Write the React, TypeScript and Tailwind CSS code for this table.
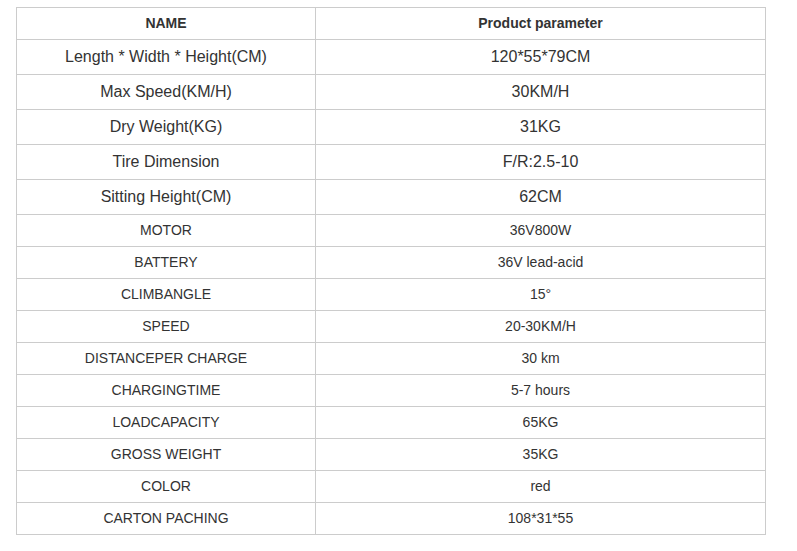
import React from 'react';

type Row = { name: string; value: string; big?: boolean };

const rows: Row[] = [
  { name: 'Length * Width * Height(CM)', value: '120*55*79CM', big: true },
  { name: 'Max Speed(KM/H)', value: '30KM/H', big: true },
  { name: 'Dry Weight(KG)', value: '31KG', big: true },
  { name: 'Tire Dimension', value: 'F/R:2.5-10', big: true },
  { name: 'Sitting Height(CM)', value: '62CM', big: true },
  { name: 'MOTOR', value: '36V800W' },
  { name: 'BATTERY', value: '36V lead-acid' },
  { name: 'CLIMBANGLE', value: '15°' },
  { name: 'SPEED', value: '20-30KM/H' },
  { name: 'DISTANCEPER CHARGE', value: '30 km' },
  { name: 'CHARGINGTIME', value: '5-7 hours' },
  { name: 'LOADCAPACITY', value: '65KG' },
  { name: 'GROSS WEIGHT', value: '35KG' },
  { name: 'COLOR', value: 'red' },
  { name: 'CARTON PACHING', value: '108*31*55' },
];

export default function App() {
  return (
    <div className="w-[797px] h-[551px] bg-white pt-[7px] pl-[16px] font-['Liberation_Sans',Arial,sans-serif] text-[#333]">
      <table className="w-[750px] border-collapse table-fixed text-center">
        <colgroup>
          <col className="w-[299px]" />
          <col />
        </colgroup>
        <thead>
          <tr>
            <th className="h-[32px] p-0 border border-[#ccc] text-[14px] font-bold">NAME</th>
            <th className="h-[32px] p-0 border border-[#ccc] text-[14px] font-bold">Product parameter</th>
          </tr>
        </thead>
        <tbody>
          {rows.map((r) => (
            <tr key={r.name}>
              <td
                className={
                  r.big
                    ? 'h-[35px] p-0 border border-[#ccc] text-[16px]'
                    : 'h-[32px] p-0 border border-[#ccc] text-[14px]'
                }
              >
                {r.name}
              </td>
              <td
                className={
                  r.big
                    ? 'h-[35px] p-0 border border-[#ccc] text-[16px]'
                    : 'h-[32px] p-0 border border-[#ccc] text-[14px]'
                }
              >
                {r.value}
              </td>
            </tr>
          ))}
        </tbody>
      </table>
    </div>
  );
}
